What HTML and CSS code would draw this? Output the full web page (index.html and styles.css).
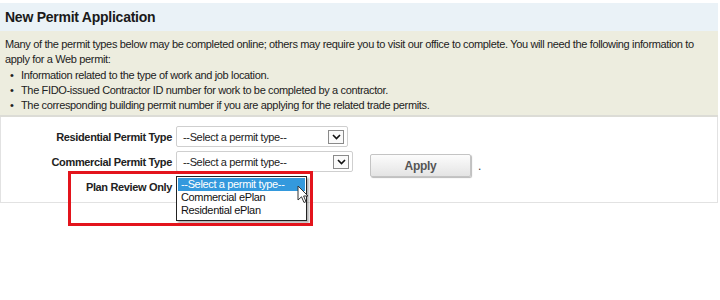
FILE: index.html
```html
<!DOCTYPE html>
<html lang="en">
<head>
    <meta charset="UTF-8">
    <title>New Permit Application</title>
    <link rel="stylesheet" href="styles.css">
</head>
<body>
    <div class="panel">
        <h2 class="panel-title">New Permit Application</h2>

        <!-- Intro / requirements -->
        <div class="info">
            <p>Many of the permit types below may be completed online; others may require you to visit our office to complete. You will need the following information to apply for a Web permit:</p>
            <ul>
                <li>Information related to the type of work and job location.</li>
                <li>The FIDO-issued Contractor ID number for work to be completed by a contractor.</li>
                <li>The corresponding building permit number if you are applying for the related trade permits.</li>
            </ul>
        </div>

        <!-- Permit type pickers -->
        <div class="form">
            <div class="form-row">
                <label class="form-label">Residential Permit Type</label>
                <div class="select select-res">
                    <span>--Select a permit type--</span>
                    <span class="select-arrow">
                        <svg width="9" height="6" viewBox="0 0 9 6"><path d="M1 1 L4.5 4.5 L8 1" fill="none" stroke="#111" stroke-width="1.6"/></svg>
                    </span>
                </div>
            </div>
            <div class="form-row">
                <label class="form-label">Commercial Permit Type</label>
                <div class="select select-com">
                    <span>--Select a permit type--</span>
                    <span class="select-arrow">
                        <svg width="9" height="6" viewBox="0 0 9 6"><path d="M1 1 L4.5 4.5 L8 1" fill="none" stroke="#111" stroke-width="1.6"/></svg>
                    </span>
                </div>
                <button class="btn-apply">Apply</button>
                <span class="dot">.</span>
            </div>
            <div class="form-row">
                <label class="form-label">Plan Review Only</label>
                <div class="dropdown">
                    <ul class="dropdown-list">
                        <li class="selected">--Select a permit type--</li>
                        <li>Commercial ePlan</li>
                        <li>Residential ePlan</li>
                    </ul>
                    <svg class="cursor" width="12" height="20" viewBox="0 0 12 20">
                        <path d="M1 1 L1 15 L4.5 11.8 L7 17.5 L9 16.6 L6.6 11 L11 11 Z" fill="#fff" stroke="#333" stroke-width="1" stroke-linejoin="round"/>
                    </svg>
                </div>
            </div>
            <div class="highlight"></div>
        </div>
    </div>
</body>
</html>
```

FILE: styles.css
```css
html, body {
    min-height: 300px;
}
body {
    margin: 0;
    padding: 3px 0 0 0;
    background: #fff;
    font-family: "Liberation Sans", Arial, sans-serif;
    letter-spacing: -0.35px;
    color: #222;
}
.panel {
    width: 718px;
}
.panel-title {
    margin: 0;
    height: 28px;
    line-height: 29px;
    padding: 0 5px;
    font-size: 14px;
    font-weight: bold;
    letter-spacing: -0.25px;
    color: #1a1a1a;
    background-color: #eaf2f7;
}
.info {
    background-color: #ededdf;
    border-bottom: 2px solid #dcdcd6;
    padding: 6px 8px 2px 5px;
    font-size: 11px;
    line-height: 15px;
}
.info p {
    margin: 0;
}
.info ul {
    margin: 1px 0 0 0;
    padding: 0 0 0 16px;
    list-style: none;
}
.info li {
    position: relative;
}
.info li::before {
    content: "\2022";
    position: absolute;
    left: -11px;
}
.form {
    position: relative;
    border: 1px solid #e2e2e2;
    border-top: none;
    padding: 9px 0 1px 0;
}
.form-row {
    display: flex;
    align-items: flex-start;
    height: 25px;
}
.form-label {
    width: 175px;
    text-align: right;
    padding: 1px 4px 0 0;
    box-sizing: border-box;
    font-size: 11px;
    font-weight: bold;
    line-height: 21px;
    color: #222;
}
.select {
    display: flex;
    align-items: center;
    justify-content: space-between;
    box-sizing: border-box;
    height: 21px;
    padding: 0 3px 0 6px;
    border: 1px solid #cfcfcf;
    border-radius: 2px;
    font-size: 11px;
    color: #222;
    background: #fff;
}
.select-res {
    width: 172px;
}
.select-com {
    width: 177px;
}
.select-arrow {
    display: flex;
    align-items: center;
    justify-content: center;
    width: 14px;
    height: 12px;
    border: 1px solid #8a8a8a;
    background: #fafafa;
}
.btn-apply {
    margin: 3px 0 0 17px;
    width: 101px;
    height: 23px;
    border: 1px solid #c4c4c4;
    border-radius: 2px;
    background: linear-gradient(#fcfcfc, #e4e4e4);
    box-shadow: 1px 1px 1px #bbb;
    font-family: inherit;
    font-size: 12px;
    font-weight: bold;
    letter-spacing: -0.3px;
    color: #555;
}
.dot {
    margin: 8px 0 0 7px;
    font-size: 12px;
    color: #444;
}
.dropdown {
    position: relative;
    width: 131px;
    height: 25px;
}
.dropdown-list {
    position: absolute;
    top: 0;
    left: 0;
    width: 131px;
    margin: 0;
    padding: 1px;
    box-sizing: border-box;
    list-style: none;
    background: #fff;
    border: 1px solid #222;
    box-shadow: 2px 2px 2px rgba(0, 0, 0, 0.3);
    font-size: 11px;
    line-height: 13px;
    color: #111;
    z-index: 2;
}
.dropdown-list li {
    padding: 0 3px;
    white-space: nowrap;
}
.dropdown-list li.selected {
    background-color: #3399dd;
    color: #fff;
}
.dropdown-list li:last-child {
    padding-bottom: 2px;
}
.cursor {
    position: absolute;
    left: 121px;
    top: 9px;
    z-index: 3;
}
.highlight {
    position: absolute;
    left: 67px;
    top: 54px;
    width: 239px;
    height: 49px;
    border: 3px solid #e3141c;
    z-index: 4;
}
```
